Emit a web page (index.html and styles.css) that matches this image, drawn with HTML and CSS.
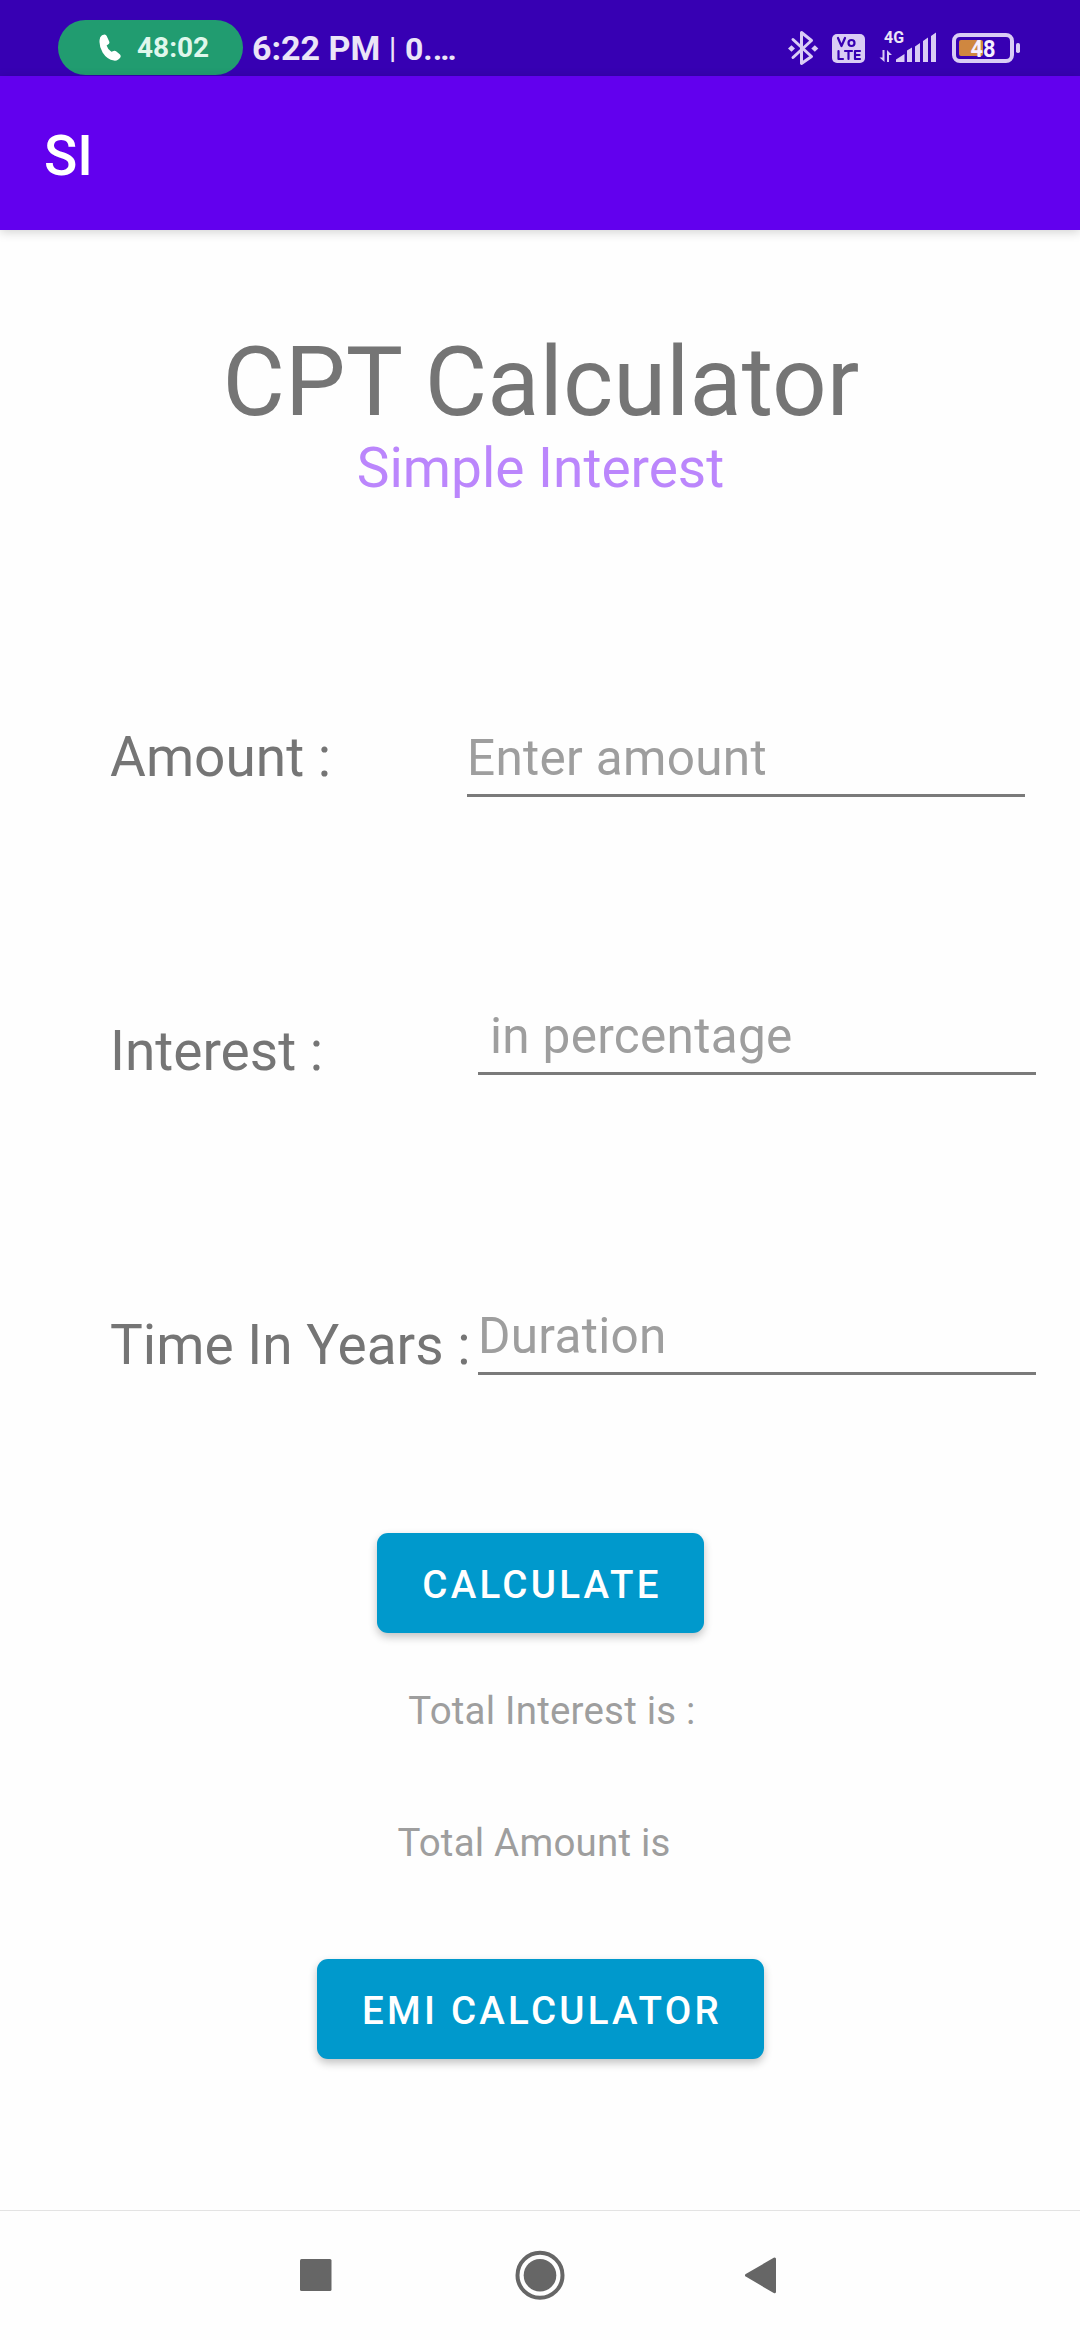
FILE: index.html
```html
<!DOCTYPE html>
<html lang="en">
<head>
<meta charset="utf-8">
<title>SI</title>
<link rel="stylesheet" href="styles.css">
</head>
<body>
<div class="screen">
  <header class="status">
    <div class="call">
      <svg class="phone" viewBox="0 0 22 27"><path d="M1.2 3.2Q2.6.6 5.5.4Q7 .3 7.7 2L10.2 7.5Q10.8 9 9.7 10L7.6 11.6Q8.6 15.3 12.4 17.8L14.6 17Q16 16.5 17.1 17.3L21 20.6Q22.2 21.9 21.3 23.5Q19.2 27 15 26.6Q8 25.5 3.6 18.5Q-1 10.300 1.200 3.200Z"/></svg>
      <span>48:02</span>
    </div>
    <span class="clock">6:22 PM</span><span class="bar">|</span><span class="speed">0.…</span>
    <div class="indicators">
      <svg width="250" height="76" viewBox="770 0 250 76">
        <g fill="none" stroke="#d9ccf5" stroke-width="3" stroke-linejoin="round" stroke-linecap="round">
          <path d="M793 39.500L811.500 56.500L801.500 63.500V32.500L811.500 40.500L793 57.500"/>
        </g>
        <g fill="#d9ccf5">
          <path d="M791.500 45.200L795 48.500L791.500 51.800L788 48.500Z"/><path d="M814.800 45.200L818.300 48.500L814.800 51.800L811.300 48.500Z"/>
          <rect x="832" y="34" width="33" height="29" rx="5"/>
          <path d="M896 62V59.500L904.500 54V62Z"/>
          <path d="M907 62V50.500L912 47.500V62ZM915 62V46.500L920 43V62ZM923 62V41L928 37.500V62ZM931 62V36L936 32.500V62Z"/>
          <path d="M882.500 50H884.500V62L879.500 57.500H882.500ZM887 62H889V55H892L887 50Z"/>
          <rect x="1016" y="43" width="4" height="10" rx="1.800"/>
        </g>
        <g fill="none" stroke="#3700b3" stroke-width="2.200" stroke-linecap="round" stroke-linejoin="round">
          <path d="M838 38L841.500 46L845 38"/><circle cx="851.500" cy="43" r="3"/>
          <path d="M838.500 51V59H843M845 51H852M848.500 51V59M860 51H855V59H860M855 55H859.500"/>
        </g>
        <rect x="954" y="35" width="58" height="26" rx="6" fill="none" stroke="#d9ccf5" stroke-width="4"/>
        <rect x="959" y="40" width="24" height="16" rx="2" fill="#cf8740"/>
        <text class="net" x="884" y="43" textLength="20" lengthAdjust="spacingAndGlyphs">4G</text>
        <text class="level" x="970.500" y="56.500" textLength="25" lengthAdjust="spacingAndGlyphs">48</text>
      </svg>
    </div>
  </header>
  <div class="appbar">SI</div>
  <main>
    <h1>CPT Calculator</h1>
    <h2>Simple Interest</h2>
    <form>
      <div class="row amount"><label for="a">Amount :</label><input id="a" placeholder="Enter amount"></div>
      <div class="row interest"><label for="i">Interest :</label><input id="i" placeholder="in percentage"></div>
      <div class="row time"><label for="t">Time In Years :</label><input id="t" placeholder="Duration"></div>
      <button class="calculate" type="button">CALCULATE</button>
      <p class="total-interest">Total Interest is :</p>
      <p class="total-amount">Total Amount is</p>
      <button class="emi" type="button">EMI CALCULATOR</button>
    </form>
  </main>
  <nav class="navbar">
    <svg width="48" height="50" viewBox="0 0 48 50"><rect x="8" y="9" width="31.500" height="32" rx="1.500"/></svg>
    <svg width="50" height="50" viewBox="0 0 50 50"><circle cx="25" cy="25.300" r="22.500" class="ring"/><circle cx="25" cy="25.300" r="16.300"/></svg>
    <svg width="48" height="50" viewBox="0 0 48 50"><path class="back" d="M6.500 25.300L34.500 9V41.800Z"/></svg>
  </nav>
</div>
</body>
</html>
```
FILE: styles.css
```css
* { box-sizing: border-box; margin: 0; padding: 0; }
body { font-family: Roboto, sans-serif; background: #fff; }
.screen { width: 1080px; height: 2340px; display: flex; flex-direction: column; overflow: hidden; background: #fefefe; }

.status { height: 76px; flex: none; display: flex; align-items: flex-start; padding: 20px 60px 0 58px; background: #3700b3; color: #ebe5f7; white-space: nowrap; }
.call { width: 185px; height: 55px; border-radius: 27.5px; background: #219c70; display: flex; align-items: center; padding-left: 41px; color: #dff7ec; font-size: 28px; font-weight: 700; }
.call span { margin-left: 16px; }
.phone { width: 22px; height: 27px; fill: #fff; }
.clock { font-size: 34px; font-weight: 700; line-height: 40px; margin: 8px 0 0 9px; width: 137px; }
.bar { font-size: 29px; font-weight: 500; line-height: 40px; margin-top: 8px; width: 16px; }
.speed { font-size: 32px; font-weight: 700; line-height: 40px; margin-top: 9px; }
.indicators { margin: -20px 0 0 auto; height: 76px; }
.indicators svg { display: block; }
.net { font-size: 16px; font-weight: 700; fill: #ebe5f7; }
.level { font-size: 23px; font-weight: 700; fill: #f5efff; }

.appbar { height: 154px; flex: none; padding: 48px 44px 0; background: #6200ee; color: #fff; font-size: 55px; font-weight: 500; line-height: 64px; box-shadow: 0 2px 10px rgba(0, 0, 0, .18); }

main { flex: 1; padding-top: 98px; color: #757575; }
h1, h2 { font-weight: 400; text-align: center; }
h1 { font-size: 96px; line-height: 108px; padding-left: 2px; }
h2 { font-size: 55px; line-height: 64px; color: #bb86fc; padding-left: 1px; }
form { display: flex; flex-direction: column; align-items: center; padding-top: 225px; }
.row { align-self: stretch; display: flex; align-items: flex-start; padding-left: 110px; }
.row label { width: 368px; flex: none; font-size: 55px; line-height: 64px; white-space: nowrap; }
.row input { width: 558px; height: 69px; padding: 0 0 6px; border: 0; border-bottom: 3px solid #7a7a7a; background: none; font: 49.5px/60px Roboto, sans-serif; letter-spacing: .3px; outline: 0; }
input::placeholder { color: #9e9e9e; opacity: 1; }
.amount { height: 281px; }
.amount label { width: 357px; }
.amount input { margin-top: 3px; }
.interest { height: 300px; }
.interest label { margin-top: 13px; }
.interest input { padding-left: 12px; }
.time { height: 227px; }
.time label { margin-top: 7px; }

button { height: 100px; border: 0; border-radius: 11px; background: #0099cc; color: #fff; font: 500 38.5px/46px Roboto, sans-serif; letter-spacing: 3.25px; padding: 3px 0 0 4px; box-shadow: 0 4px 8px rgba(0, 0, 0, .24); }
.calculate { width: 327px; }
.emi { width: 447px; }
p { font-size: 38.5px; line-height: 46px; letter-spacing: .2px; color: #9e9e9e; white-space: pre; }
.total-interest { margin: 54.5px 0 86.5px 24px; }
.total-amount { margin: 0 12px 93px 0; }

.navbar { height: 130px; flex: none; display: flex; justify-content: space-between; padding: 39px 292px 0; border-top: 1px solid #e3e3e3; fill: #666; }
.ring { fill: none; stroke: #666; stroke-width: 4; }
.back { stroke: #666; stroke-width: 3; stroke-linejoin: round; }
```
